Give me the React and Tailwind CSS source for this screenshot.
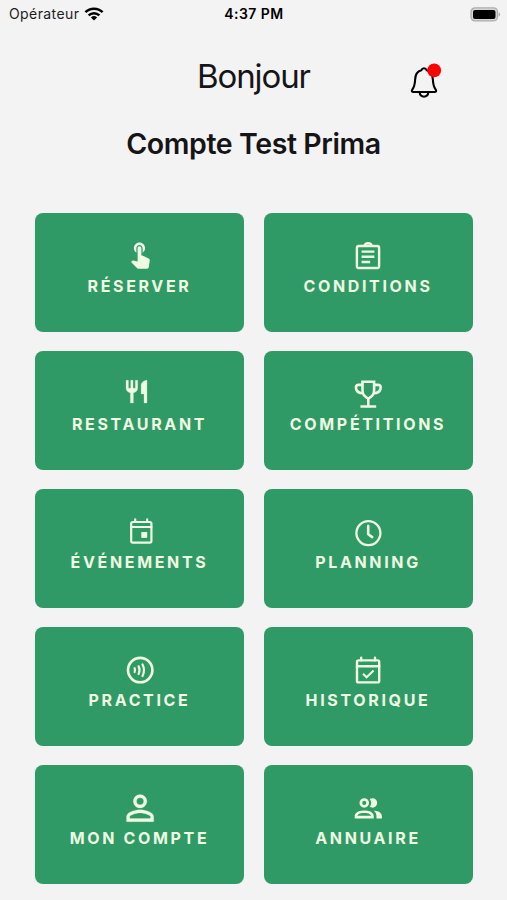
import React from "react";

const stroke = {
  fill: "none",
  stroke: "currentColor",
  strokeWidth: 2.2,
  strokeLinecap: "round",
  strokeLinejoin: "round",
};

// Every tile icon is drawn in a 40x32 frame.
const icons = {
  touch: (
    <path
      transform="translate(5.1 -.3) scale(1.25)"
      d="M9 11.24V7.5C9 6.12 10.12 5 11.5 5S14 6.12 14 7.5v3.74c1.21-.81 2-2.18 2-3.74C16 5.01 13.99 3 11.5 3S7 5.01 7 7.5c0 1.56.79 2.93 2 3.74zm9.84 4.63l-4.54-2.26c-.17-.07-.35-.11-.54-.11H13v-6c0-.83-.67-1.5-1.5-1.5S10 6.67 10 7.5v10.74l-3.43-.72c-.08-.01-.15-.03-.24-.03-.31 0-.59.13-.79.33l-.79.8 4.94 4.94c.27.27.65.44 1.06.44h6.79c.75 0 1.33-.55 1.44-1.28l.75-5.27c.01-.07.02-.14.02-.2 0-.62-.38-1.16-.91-1.38z"
    />
  ),
  clipboard: (
    <g {...stroke} strokeWidth="2.4">
      <rect x="8.9" y="7" width="22.2" height="22" rx="1.8" />
      <path d="M16.6 6.6a3.4 2.3 0 0 1 6.8 0" />
      <path d="M13.6 12.6h12.8M13.6 17.8h12.8M13.6 23h8.6" strokeLinecap="butt" />
    </g>
  ),
  restaurant: (
    <path
      transform="translate(2.6 1.1) scale(1.16 1.13)"
      stroke="currentColor"
      strokeWidth=".25"
      d="M11 9H9V2H7v7H5V2H3v7c0 2.12 1.66 3.84 3.75 3.97V22h2.5v-9.03C11.34 12.84 13 11.12 13 9V2h-2v7zm5-3v8h2.5v8H21V2c-2.76 0-5 2.24-5 4z"
    />
  ),
  trophy: (
    <g {...stroke} strokeWidth="2.6" strokeLinecap="butt" strokeLinejoin="miter">
      <path d="M14.5 4.7h11.6v8.9c0 3.6-2 6.2-5.8 8.1-3.8-1.9-5.8-4.5-5.8-8.1z" />
      <path d="M14.5 7.9h-4.2c-2.4 0-2.7 2.1-2.1 4.2.6 2.5 3 4 6.9 4.2M26.1 7.9h4.2c2.4 0 2.7 2.1 2.1 4.2-.6 2.5-3 4-6.9 4.2M20.3 21v8M12.4 29.5h15.8" />
    </g>
  ),
  event: (
    <g {...stroke}>
      <rect x="11.2" y="7" width="20.2" height="20.7" rx="1.6" />
      <path d="M11.2 12h20.2M15.2 4.3v2.5M27.2 4.3v2.5" />
      <path d="M21.3 17h5.9v5.9h-5.9z" fill="currentColor" stroke="none" />
    </g>
  ),
  clock: (
    <g {...stroke} strokeWidth="2.3">
      <circle cx="20.4" cy="18.1" r="12" />
      <path d="M20.2 10.9v8.4l4 2.8" strokeWidth="2.6" />
    </g>
  ),
  contactless: (
    <g {...stroke} strokeWidth="2.6">
      <circle cx="20.2" cy="17.1" r="12.2" />
      <path d="M14.6 15.2q.9 1.9 0 3.9M18.6 13.3q1.9 3.8 0 7.8M22.5 11.4q3 5.7 0 11.6" strokeWidth="2.2" />
    </g>
  ),
  calendarCheck: (
    <g {...stroke} strokeWidth="2.4">
      <rect x="9" y="7.4" width="22.2" height="22" rx="1.5" />
      <path d="M9 13.3h22.2M13.2 4.7v2.5M27 4.7v2.5" />
      <path d="M15 20.7l3.6 3.6 7-6.8" strokeWidth="2" strokeLinecap="butt" strokeLinejoin="miter" />
    </g>
  ),
  person: (
    <path
      transform="translate(-.3 -3.3) scale(1.7)"
      stroke="currentColor"
      strokeWidth=".12"
      d="M12 5.9a2.1 2.1 0 1 1 0 4.2 2.1 2.1 0 0 1 0-4.2m0 9c2.97 0 6.1 1.46 6.1 2.1v1.1H5.9V17c0-.64 3.13-2.1 6.1-2.1M12 4C9.79 4 8 5.79 8 8s1.79 4 4 4 4-1.79 4-4-1.79-4-4-4zm0 9c-2.67 0-8 1.34-8 4v3h16v-3c0-2.66-5.33-4-8-4z"
    />
  ),
  people: (
    <path
      transform="translate(4 1.7) scale(1.36)"
      d="M13.07 10.41A5 5 0 0 0 13.07 4.59A3.39 3.39 0 0 1 15 4A3.5 3.5 0 0 1 15 11A3.39 3.39 0 0 1 13.07 10.41M5.5 7.5A3.5 3.5 0 1 1 9 11A3.5 3.5 0 0 1 5.5 7.5M7.5 7.5A1.5 1.5 0 1 0 9 6A1.5 1.5 0 0 0 7.5 7.5M16 17V19H2V17S2 13 9 13 16 17 16 17M14 17C13.86 16.22 12.67 15 9 15S4.07 16.31 4 17M15.95 13A5.32 5.32 0 0 1 18 17V19H22V17S22 13.37 15.94 13Z"
    />
  ),
};

const tiles = [
  ["RÉSERVER", "touch"],
  ["CONDITIONS", "clipboard"],
  ["RESTAURANT", "restaurant"],
  ["COMPÉTITIONS", "trophy"],
  ["ÉVÉNEMENTS", "event"],
  ["PLANNING", "clock"],
  ["PRACTICE", "contactless"],
  ["HISTORIQUE", "calendarCheck"],
  ["MON COMPTE", "person"],
  ["ANNUAIRE", "people"],
];

function Tile({ label, icon }) {
  return (
    <button className="flex h-[118.5px] flex-col items-center rounded-lg bg-[#2f9a65] pt-[26px] text-[#effbe3]">
      <svg width="40" height="32" viewBox="0 0 40 32" fill="currentColor" className="shrink-0 overflow-visible">
        {icons[icon]}
      </svg>
      <span className="mt-[5px] text-[16px] leading-5 font-bold tracking-[2.65px] whitespace-nowrap">
        {label}
      </span>
    </button>
  );
}

function StatusBar() {
  return (
    <div className="grid h-7 grid-cols-[1fr_auto_1fr] items-center pr-[6px] pl-[9px] text-[14px] leading-5 text-[#1c1c1e]">
      <div className="flex items-center gap-[5px]">
        <span className="tracking-[0.4px]">Opérateur</span>
        <svg width="20" height="14" viewBox="0 0 20 14" fill="none" stroke="#000" strokeWidth="2.5">
          <path d="M1.4 5.1a12.4 12.4 0 0 1 17.2 0M4.6 8.3a7.8 7.8 0 0 1 10.8 0" />
          <path d="M10 13.6 6.9 10.5a4.5 4.5 0 0 1 6.2 0z" fill="#000" stroke="none" />
        </svg>
      </div>
      <span className="mr-[2px] font-semibold tracking-[0.45px] text-black">4:37 PM</span>
      <svg width="31" height="15" viewBox="0 0 31 15" className="justify-self-end">
        <rect x="1" y=".9" width="26.5" height="13" rx="4" fill="#d5d5d5" stroke="#adadad" strokeWidth="1.3" />
        <rect x="3" y="2.9" width="22.5" height="9" rx="2" fill="#000" />
        <path d="M28.7 5.2c2 .8 2 3.6 0 4.4z" fill="#adadad" />
      </svg>
    </div>
  );
}

export default function App() {
  return (
    <div className="h-[900px] w-[507px] overflow-hidden bg-[#f3f3f3] font-['Inter','Liberation_Sans',sans-serif] text-[#151517]">
      <StatusBar />
      <header className="flex flex-col">
        <div className="mt-[21px] grid grid-cols-[1fr_auto_1fr] items-center">
          <span />
          <h1 className="text-[33px] leading-12 font-normal tracking-[-1.1px]">Bonjour</h1>
          <svg width="36" height="40" viewBox="0 0 36 40" className="mt-[14px] ml-[98px]">
            <path
              d="M16 5.3c1.2 0 2.2.7 2.7 2 4.3 1.1 6 4.7 6.2 9.4.2 4.5.8 7.2 2.8 10 .9 1.3.4 2.3-1 2.3H5.3c-1.4 0-1.900-1-1-2.3 2-2.8 2.6-5.5 2.8-10 .2-4.7 1.9-8.3 6.2-9.4.5-1.3 1.5-2 2.7-2zM11.6 29.2c.3 2.9 2 4.5 4.4 4.5s4.1-1.6 4.4-4.5"
              fill="none"
              stroke="#000"
              strokeWidth="2.1"
              strokeLinejoin="round"
            />
            <circle cx="26.2" cy="7.4" r="6.9" fill="#ff0000" />
          </svg>
        </div>
        <h2 className="mt-[20.5px] text-center text-[28.5px] leading-10 font-semibold tracking-[-0.4px]">
          Compte Test Prima
        </h2>
      </header>
      <main className="mt-[49.9px] grid grid-cols-2 gap-[19.5px] pr-[34.5px] pl-[35px]">
        {tiles.map(([label, icon]) => (
          <Tile key={label} label={label} icon={icon} />
        ))}
      </main>
    </div>
  );
}
